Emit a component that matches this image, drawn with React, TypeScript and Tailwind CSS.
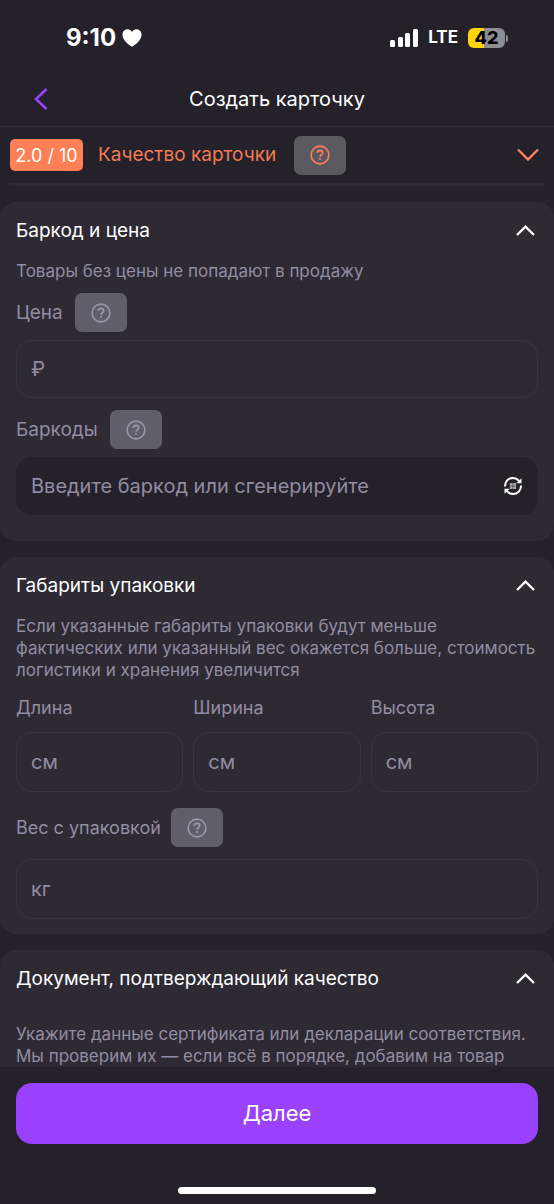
import { useState, type ReactNode } from "react";

const cardText = `text-[17px] leading-[22px] whitespace-nowrap text-[#928da0]`
const fieldText = `text-[20px] text-white placeholder:text-[#928da0] placeholder:opacity-100`

export default function App(){
    return(
        <div className="flex flex-col h-screen overflow-hidden bg-[#24212b] text-white font-['Inter','Noto_Sans',sans-serif]">
            <StatusBar />
            <NavBar />
            <main className="flex-1 min-h-0 overflow-hidden">
                <QualityRow />
                <div className="mt-4 flex flex-col gap-4">
                    <PriceCard />
                    <SizeCard />
                    <DocumentCard />
                </div>
            </main>
            <Footer />
        </div>
    )
}

const StatusBar = ()=>{
    return(
        <div className="flex items-center justify-between h-[76px] pl-[66px] pr-[46px] shrink-0">
            <div className="flex items-center gap-[6px]">
                <span className="text-[24px] font-bold">9:10</span>
                <svg className="w-5 h-[18px]" viewBox="1 1 20 18.400" fill="#fff">
                    <path d="M11 19.2C9.4 18.3 1.2 13 1.2 6.9 1.2 3.500 3.600 1.200 6.400 1.200 8.400 1.200 10 2.200 11 4 12 2.200 13.600 1.200 15.600 1.200 18.400 1.200 20.800 3.500 20.800 6.900 20.800 13 12.600 18.300 11 19.200Z" />
                </svg>
            </div>
            <div className="flex items-center gap-[10px]">
                <svg className="w-7 h-[18px]" viewBox="0 0 28 18" fill="#fff">
                    <rect x="0" y="11" width="5" height="7" rx="1.5" />
                    <rect x="8" y="8" width="5" height="10" rx="1.5" />
                    <rect x="15" y="4" width="5" height="14" rx="1.5" />
                    <rect x="23" y="0" width="5" height="18" rx="1.5" />
                </svg>
                <span className="text-[17px] font-bold">LTE</span>
                <div className="flex items-center gap-px">
                    <div className="flex items-center justify-center w-[37px] h-5 rounded-md bg-linear-to-r from-[#ffd60a] from-42% to-[#8f8d94] to-42% text-black text-[18px] leading-5 font-extrabold">
                        42
                    </div>
                    <div className="w-[2px] h-[7px] rounded-r-full bg-[#8f8d94]" />
                </div>
            </div>
        </div>
    )
}

const NavBar = ()=>{
    return(
        <header className="grid grid-cols-[64px_1fr_64px] items-center h-[51px] pb-[5px] border-b border-[#302d38] shrink-0">
            <button type="button" aria-label="Назад" className="flex pl-[34px] cursor-pointer">
                <svg className="w-[14px] h-[22px]" viewBox="0 0 14 22" fill="none" stroke="#9a41fe" strokeWidth="2.600">
                    <path d="M12.500 1 2 11l10.500 10" />
                </svg>
            </button>
            <h1 className="text-center text-[20px]">Создать карточку</h1>
        </header>
    )
}

const QualityRow = ()=>{
    return(
        <div>
            <div className="flex items-center h-14 px-[10px]">
                <span className="flex items-center justify-center w-[73px] h-8 rounded-[5px] bg-[#ff8057] text-[18px]">2.0 / 10</span>
                <span className="ml-[15px] text-[19px] text-[#f27b54]">Качество карточки</span>
                <HelpButton className="ml-[18px] bg-[#5a595f] text-[#ff8057]" />
                <button type="button" aria-label="Развернуть" className="ml-auto mr-[5px] cursor-pointer">
                    <svg className="w-[22px] h-[14px]" viewBox="0 0 22 14" fill="none" stroke="#ff8057" strokeWidth="2.400">
                        <path d="M1 1.500l10 10 10-10" />
                    </svg>
                </button>
            </div>
            <div className="mx-2 h-[3px] rounded-b-full bg-[#2d2a34]" />
        </div>
    )
}

const HelpButton = ({className = "bg-[#605e68] text-[#9c96ab]"}: {className?: string})=>{
    return(
        <button type="button" aria-label="Подсказка" className={`flex items-center justify-center w-[52px] h-[39px] rounded-[7px] cursor-pointer ${className}`}>
            <svg className="w-5 h-5" viewBox="0 0 20 20" fill="none" stroke="currentColor" strokeWidth="1.600">
                <circle cx="10" cy="10" r="8.900" />
                <path d="M7.300 7.900c0-1.500 1.200-2.500 2.700-2.500s2.700 1 2.700 2.400c0 2-2.700 1.900-2.700 3.900" />
                <circle cx="10" cy="14" r="1.100" fill="currentColor" stroke="none" />
            </svg>
        </button>
    )
}

const Card = ({title, children}: {title: string, children: ReactNode})=>{
    const [open,setOpen] = useState(true);
    return(
        <section className="px-4 pt-[13px] rounded-2xl bg-[#2d2a34]">
            <h2>
                <button
                    type="button"
                    aria-expanded={open}
                    onClick={()=>setOpen(!open)}
                    className="flex items-center justify-between w-full h-8 pr-[3px] text-left text-[19px] cursor-pointer"
                >
                    {title}
                    <svg className={`w-[19px] h-[13px] ${open?'':'rotate-180'}`} viewBox="0 0 19 13" fill="none" stroke="#fff" strokeWidth="2.300">
                        <path d="M1 10l8.500-8.300L18 10" />
                    </svg>
                </button>
            </h2>
            {open&&children}
        </section>
    )
}

const Label = ({id, text, size = "text-[19px]"}: {id: string, text: string, size?: string})=>{
    return <label htmlFor={id} className={`leading-6 text-[#928da0] ${size}`}>{text}</label>
}

const PriceCard = ()=>{
    return(
        <Card title="Баркод и цена">
            <p className={`mt-[13px] ${cardText}`}>Товары без цены не попадают в продажу</p>
            <div className="flex items-center gap-3 mt-[11px]">
                <Label id="price" text="Цена" />
                <HelpButton />
            </div>
            <input id="price" type="text" placeholder="₽" className={`mt-2 w-full h-[58px] px-[14px] rounded-2xl border border-[#383541] ${fieldText}`} />
            <div className="flex items-center gap-3 mt-3">
                <Label id="barcode" text="Баркоды" />
                <HelpButton />
            </div>
            <div className="flex items-center mt-2 mb-[26px] h-[58px] pl-[15px] pr-4 rounded-2xl bg-[#24212b]">
                <input id="barcode" type="text" placeholder="Введите баркод или сгенерируйте" className={`flex-1 min-w-0 ${fieldText}`} />
                <button type="button" aria-label="Сгенерировать" className="cursor-pointer">
                    <GenerateIcon />
                </button>
            </div>
        </Card>
    )
}

const GenerateIcon = ()=>{
    return(
        <svg className="w-[18px] h-[18px]" viewBox="0 0 18 18" fill="none" stroke="#fff" strokeWidth="2">
            <path d="M1 9.500V8.900C1 4.500 4.500 1 8.900 1c2.600 0 4.900 1.200 6.300 3.100" />
            <path d="M17 8.500v.6c0 4.400-3.500 7.900-7.900 7.900-2.600 0-4.900-1.200-6.300-3.100" />
            <path d="M17.500 1.200v5h-5.200z" fill="#fff" stroke="none" />
            <path d="M.5 16.800v-5h5.200z" fill="#fff" stroke="none" />
            <path d="M5.800 6h2.900v2.800H5.800zM9.200 6h2.900v2.800H9.200zM5.800 9.300h2.900v2.800H5.800zM9.200 9.300h2.900v2.800H9.200z" fill="#a9a7ae" stroke="none" />
        </svg>
    )
}

const sizes = [
    { id: "length", label: "Длина" },
    { id: "width", label: "Ширина" },
    { id: "height", label: "Высота" },
]

const SizeCard = ()=>{
    return(
        <Card title="Габариты упаковки">
            <p className={`mt-[13px] ${cardText}`}>
                Если указанные габариты упаковки будут меньше<br />
                фактических или указанный вес окажется больше, стоимость<br />
                логистики и хранения увеличится
            </p>
            <div className="grid grid-cols-3 gap-[10px] mt-[15px]">
                {sizes.map((val)=>
                    <div key={val.id} className="flex flex-col gap-3">
                        <Label id={val.id} text={val.label} size="text-[18px]" />
                        <input id={val.id} type="text" placeholder="см" className={`w-full h-[60px] px-[14px] rounded-2xl border border-[#383541] ${fieldText}`} />
                    </div>
                )}
            </div>
            <div className="flex items-center gap-[10px] mt-4">
                <Label id="weight" text="Вес с упаковкой" size="text-[18px]" />
                <HelpButton />
            </div>
            <input id="weight" type="text" placeholder="кг" className={`mt-3 mb-[15px] w-full h-[60px] px-[14px] rounded-2xl border border-[#383541] ${fieldText}`} />
        </Card>
    )
}

const DocumentCard = ()=>{
    return(
        <Card title="Документ, подтверждающий качество">
            <p className={`mt-7 pb-6 ${cardText}`}>
                Укажите данные сертификата или декларации соответствия.<br />
                Мы проверим их — если всё в порядке, добавим на товар
            </p>
        </Card>
    )
}

const Footer = ()=>{
    return(
        <footer className="flex flex-col items-center px-4 pt-4 pb-[10px] bg-[#24212b] shrink-0">
            <button type="button" className="w-full h-[61px] rounded-2xl bg-[#9a41fe] text-[22px] cursor-pointer">Далее</button>
            <div className="mt-[43px] w-[198px] h-[7px] rounded-full bg-white" />
        </footer>
    )
}
